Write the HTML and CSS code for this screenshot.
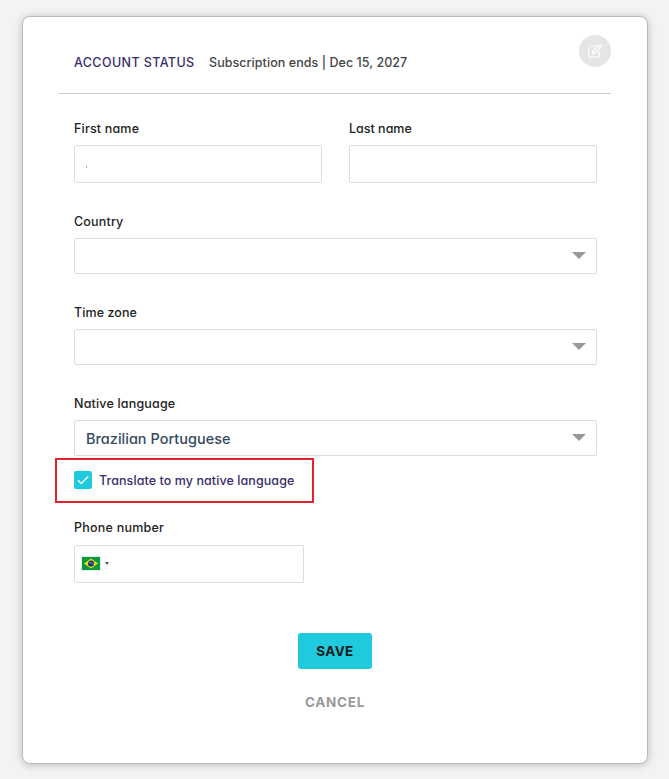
FILE: index.html
```html
<!DOCTYPE html>
<html lang="en">
<head>
<meta charset="utf-8">
<title>Account</title>
<link rel="stylesheet" href="styles.css">
</head>
<body>
<main class="card">
  <header class="header">
    <span class="status-title">ACCOUNT STATUS</span>
    <span class="status-text">Subscription ends | Dec 15, 2027</span>
    <button class="edit" type="button" aria-label="Edit">
      <svg width="16" height="16" viewBox="0 0 16 16" fill="none" stroke="#fff" stroke-width="1.1" stroke-linejoin="round" stroke-linecap="round"><path d="M9.3 3H2.8Q1.8 3 1.8 4v9q0 1 1 1h8.4q1 0 1-1V8.700"/><path d="M5 11l.5-2.500 6.800-6.700q.7-.6 1.400 0l.5.5q.7.700 0 1.400L7.500 10.500zM11.300 2.900l1.900 1.900M5.600 8.600l1.800 1.800"/></svg>
    </button>
  </header>
  <form class="form">
    <div class="row">
      <div class="field"><label class="label">First name</label><div class="input"><span class="dot"></span></div></div>
      <div class="field"><label class="label last">Last name</label><div class="input"></div></div>
    </div>
    <div class="field"><label class="label">Country</label><div class="select"><i class="arrow"></i></div></div>
    <div class="field"><label class="label zone">Time zone</label><div class="select"><i class="arrow"></i></div></div>
    <div class="field language"><label class="label">Native language</label><div class="select"><span class="value">Brazilian Portuguese</span><i class="arrow"></i></div></div>
    <div class="translate">
      <span class="check"><svg width="18" height="18" viewBox="0 0 18 18" fill="none" stroke="#fff" stroke-width="1.500"><path d="M4 9.300l3.300 3.200L14.200 5.500"/></svg></span>
      <span class="translate-text">Translate to my native language</span>
    </div>
    <div class="field phone"><label class="label">Phone number</label>
      <div class="input tel">
        <svg class="flag" width="20" height="15" viewBox="0 0 20 15"><path fill="#e9e9ee" d="M0 0h20v15H0z"/><path fill="#079b3c" d="M1 1h18v13H1z"/><path fill="#f0df18" d="M10 2.500l7 5-7 5-7-5z"/><circle cx="10" cy="7.500" r="3.100" fill="#19376f"/><path d="M7.300 6.600q3-.3 5.300 1.800" stroke="#a5bccb" stroke-width=".7" fill="none"/></svg>
        <i class="caret"></i>
      </div>
    </div>
  </form>
  <div class="actions">
    <button class="save" type="button">SAVE</button>
    <button class="cancel" type="button">CANCEL</button>
  </div>
</main>
</body>
</html>
```
FILE: styles.css
```css
* { box-sizing: border-box; }
body {
  margin: 0;
  padding: 16px 21px 15px 22px;
  height: 779px;
  background: #f3f3f3;
  font-family: Inter, "Liberation Sans", sans-serif;
  font-feature-settings: "cv11";
  font-size: 12.5px;
  font-weight: 500;
}
button { border: 0; padding: 0; font: inherit; }
.card {
  height: 748px;
  padding: 0 36px;
  background: #fff;
  border: 1px solid #b9bcbf;
  border-radius: 8px;
  box-shadow: 0 1px 9px rgba(0, 0, 0, .23);
}
.header {
  display: flex;
  align-items: center;
  height: 77px;
  padding: 16px 0 0 15px;
  border-bottom: 1px solid #ccc;
  line-height: 18px;
  white-space: nowrap;
}
.status-title { width: 135px; color: #392c6d; letter-spacing: .4px; }
.status-text { color: #454545; letter-spacing: .06px; }
.edit {
  display: flex;
  align-items: center;
  justify-content: center;
  width: 32px;
  height: 32px;
  margin: -24px 0 0 auto;
  border-radius: 50%;
  background: #e5e5e5;
}
.form { padding: 25px 14px 0 15px; }
.row { display: flex; gap: 27px; }
.row .field { flex: 1; }
.field { margin-bottom: 29px; }
.label {
  display: block;
  height: 26px;
  line-height: 20px;
  color: #222;
  white-space: nowrap;
  letter-spacing: .18px;
}
.last { letter-spacing: 0; }
.zone { letter-spacing: .08px; }
.input, .select {
  display: flex;
  align-items: center;
  border: 1px solid #ddd;
  border-radius: 2px;
}
.input { height: 38px; }
.select { height: 36px; padding: 0 10px 0 11px; }
.dot { width: 1px; height: 2px; margin: 5px 0 0 11px; background: #c1a98c; }
.arrow {
  margin: -1px 0 0 auto;
  border: 7px solid transparent;
  border-top-color: #999;
  border-bottom: 0;
}
.value { padding-top: 2px; color: #344a5e; font-size: 14.5px; line-height: 20px; }
.language { margin-bottom: 2px; }
.translate {
  display: flex;
  align-items: center;
  width: 259px;
  height: 45px;
  margin-left: -19px;
  padding: 0 0 1px 17px;
  border: 2px solid #e3222a;
}
.check { display: flex; width: 18px; height: 18px; margin-right: 7px; border-radius: 2px; background: #1fcadf; }
.translate-text { color: #392c6d; white-space: nowrap; letter-spacing: .08px; }
.phone { margin: 15px 0 0; }
.phone .label { height: 27px; letter-spacing: .23px; }
.tel { width: 230px; padding: 0 0 2px 6px; }
.flag { display: block; }
.caret { margin-left: 4px; border: 2px solid transparent; border-top: 3px solid #555; border-bottom: 0; }
.actions { display: flex; flex-direction: column; align-items: center; padding-top: 50px; }
.save {
  width: 74px;
  height: 36px;
  border-radius: 3px;
  background: #1fcadf;
  color: #1b1b1b;
  font-size: 13.5px;
  font-weight: 700;
  letter-spacing: .35px;
}
.cancel {
  height: 20px;
  margin-top: 23px;
  background: none;
  color: #999;
  font-size: 13.5px;
  font-weight: 700;
  letter-spacing: .7px;
}
```
